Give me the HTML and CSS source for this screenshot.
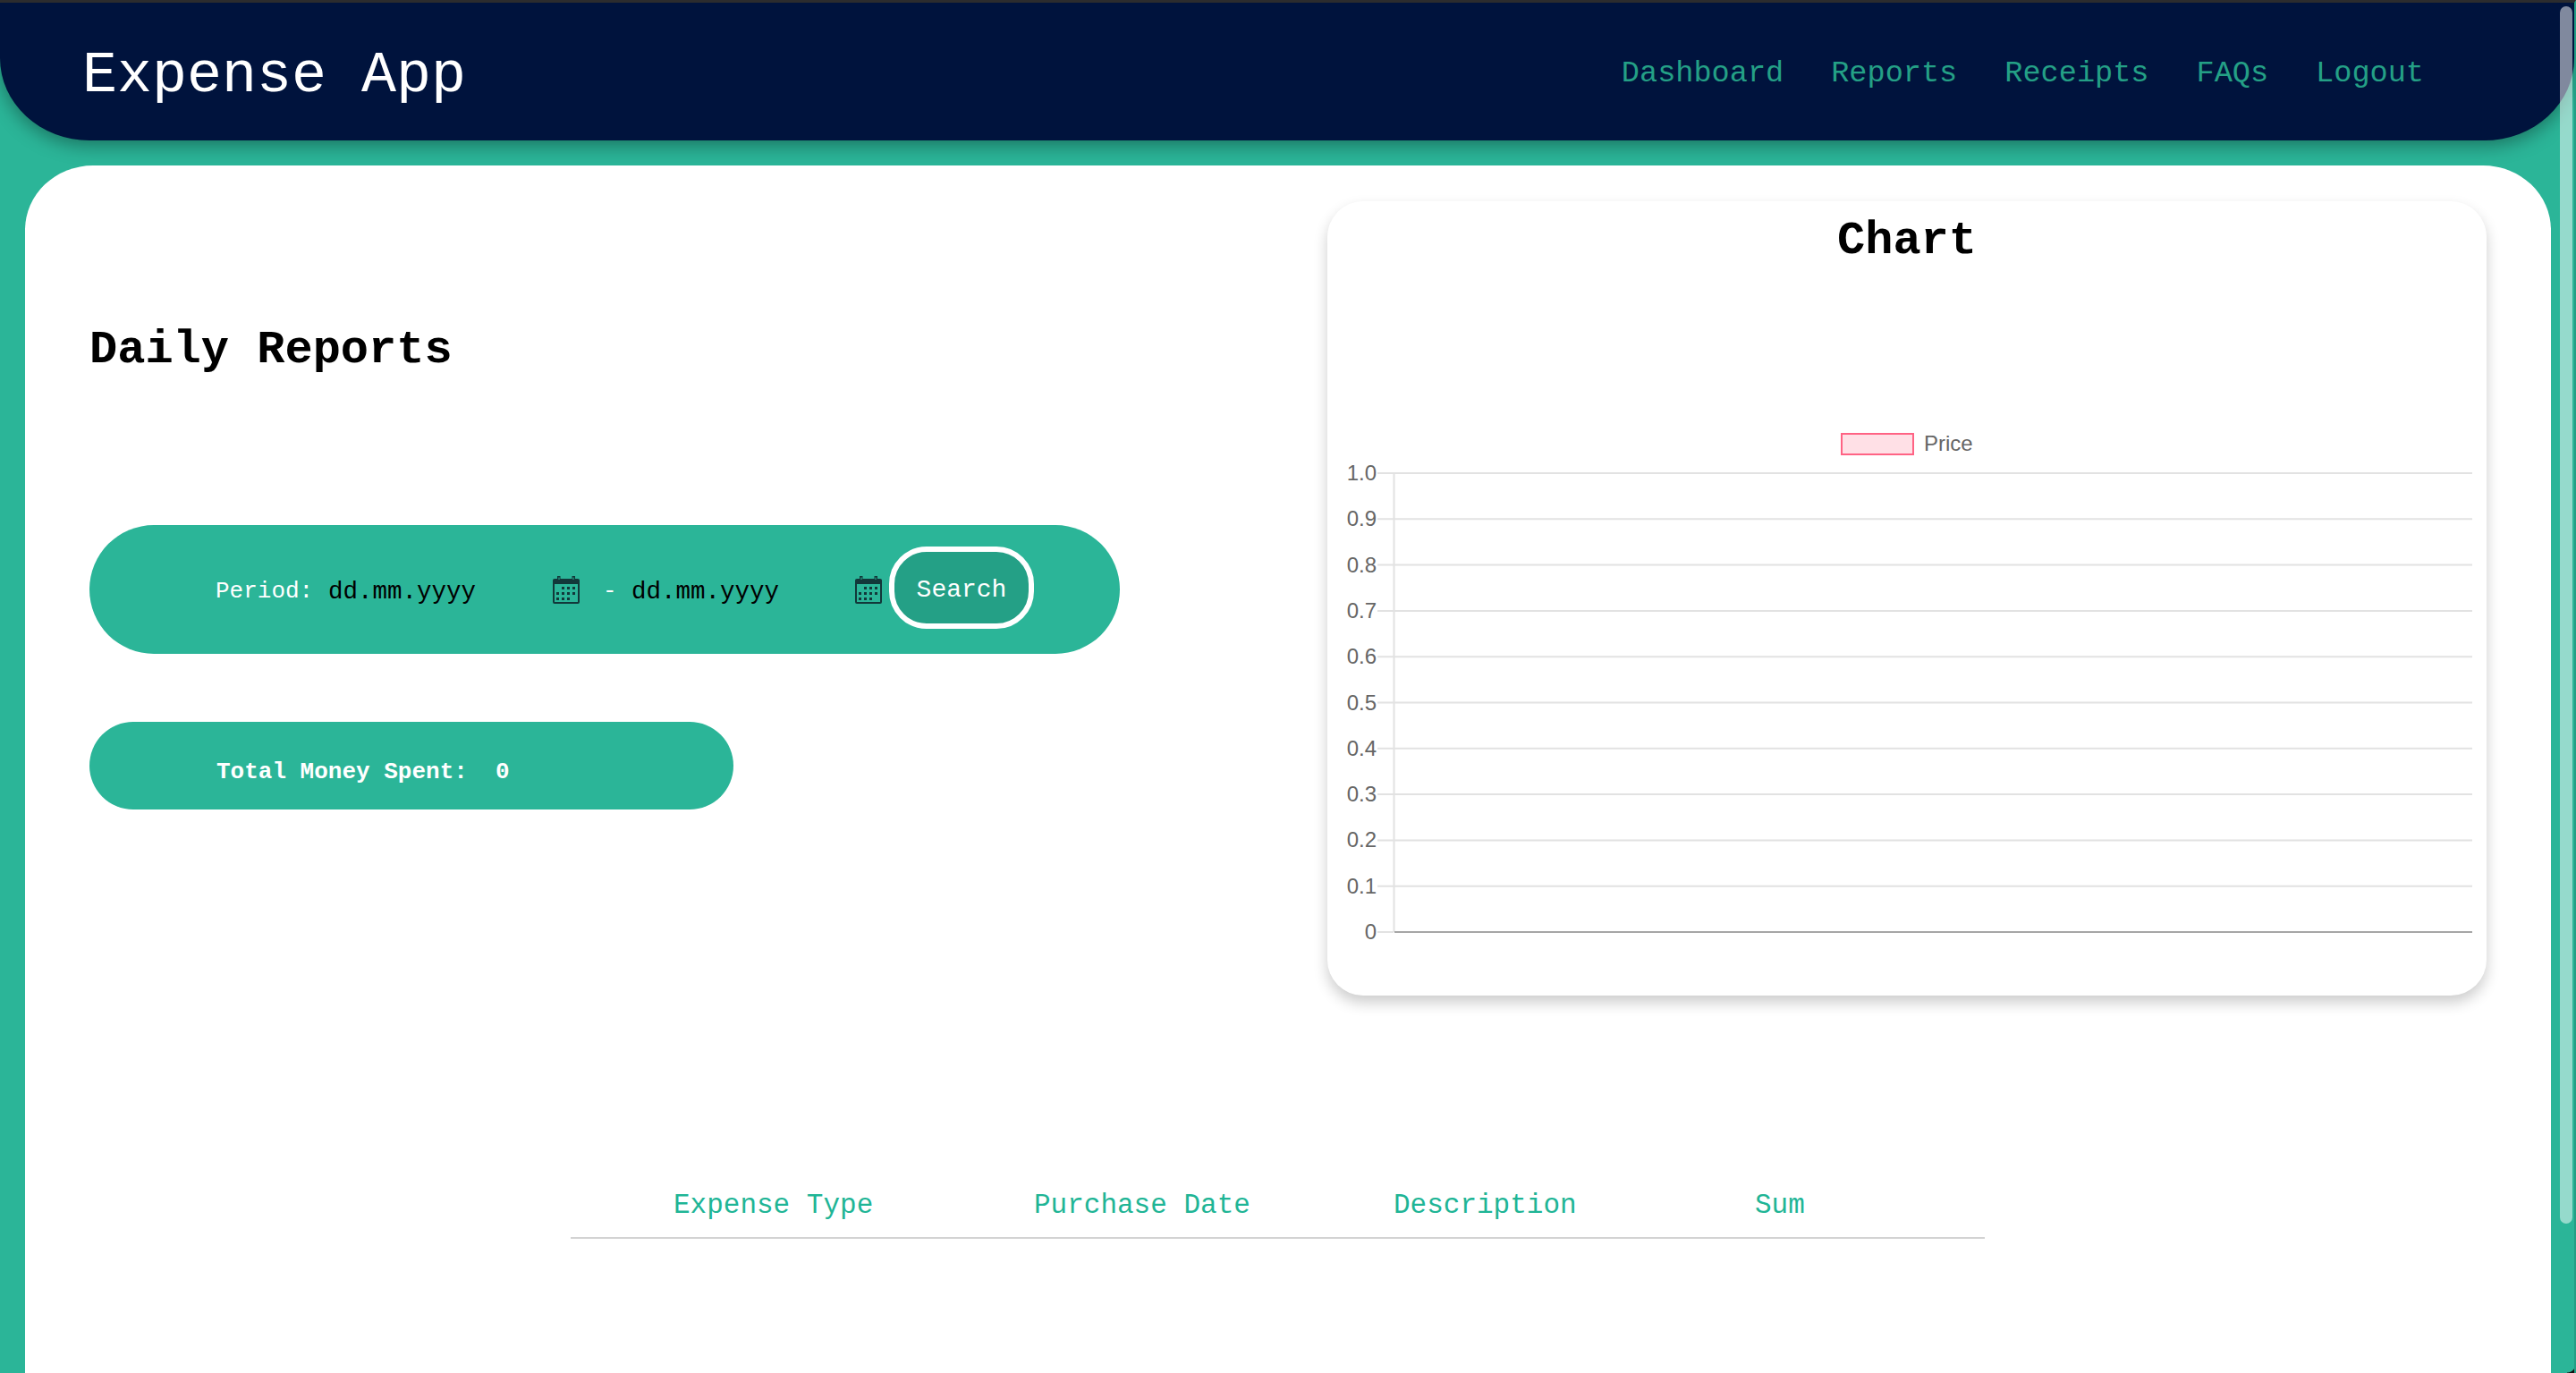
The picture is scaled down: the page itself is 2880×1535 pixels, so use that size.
FILE: index.html
```html
<!DOCTYPE html>
<html lang="en">
<head>
<meta charset="utf-8">
<title>Expense App</title>
<link rel="stylesheet" href="styles.css">
</head>
<body>
<div class="page">
  <header class="topbar">
    <div class="brand">Expense App</div>
    <nav class="nav">
      <a href="#">Dashboard</a>
      <a href="#">Reports</a>
      <a href="#">Receipts</a>
      <a href="#">FAQs</a>
      <a href="#">Logout</a>
    </nav>
  </header>
  <main class="main">
    <div class="top-grid">
      <section class="left">
        <h1 class="title">Daily Reports</h1>
        <form class="period pill">
          <span class="period-label">Period:</span>
          <span class="date-field">
            <span class="date-text">dd.mm.yyyy</span>
            <svg class="cal" viewBox="0 0 30 32"><use href="#calendar"/></svg>
          </span>
          <span class="dash">-</span>
          <span class="date-field date-field-b">
            <span class="date-text">dd.mm.yyyy</span>
            <svg class="cal" viewBox="0 0 30 32"><use href="#calendar"/></svg>
          </span>
          <button class="search" type="button">Search</button>
        </form>
        <div class="total pill">Total Money Spent:  0</div>
      </section>
      <section class="card">
        <h2 class="card-title">Chart</h2>
        <svg class="chart" viewBox="0 0 1296 803" width="1296" height="803">
          <rect class="legend-box" x="575" y="175" width="80" height="23"/>
          <text class="legend-text" x="667" y="183" dy="11">Price</text>
          <g class="grid">
            <line x1="56" x2="1280" y1="219" y2="219"/>
            <line x1="56" x2="1280" y1="270.3" y2="270.3"/>
            <line x1="56" x2="1280" y1="321.6" y2="321.6"/>
            <line x1="56" x2="1280" y1="372.9" y2="372.9"/>
            <line x1="56" x2="1280" y1="424.2" y2="424.2"/>
            <line x1="56" x2="1280" y1="475.5" y2="475.5"/>
            <line x1="56" x2="1280" y1="526.8" y2="526.8"/>
            <line x1="56" x2="1280" y1="578.1" y2="578.1"/>
            <line x1="56" x2="1280" y1="629.4" y2="629.4"/>
            <line x1="56" x2="1280" y1="680.7" y2="680.7"/>
            <line x1="74.5" x2="74.5" y1="219" y2="732"/>
            <line x1="56" x2="74" y1="732" y2="732"/>
          </g>
          <line class="zero" x1="75" x2="1280" y1="732" y2="732"/>
          <g class="ticks">
            <text x="55" y="227">1.0</text>
            <text x="55" y="278.3">0.9</text>
            <text x="55" y="329.6">0.8</text>
            <text x="55" y="380.9">0.7</text>
            <text x="55" y="432.2">0.6</text>
            <text x="55" y="483.5">0.5</text>
            <text x="55" y="534.8">0.4</text>
            <text x="55" y="586.1">0.3</text>
            <text x="55" y="637.4">0.2</text>
            <text x="55" y="688.7">0.1</text>
            <text x="55" y="740">0</text>
          </g>
        </svg>
      </section>
    </div>
    <section class="table-wrap">
      <div class="table-head">
        <span>Expense Type</span>
        <span>Purchase Date</span>
        <span>Description</span>
        <span>Sum</span>
      </div>
    </section>
  </main>
  <div class="scrollbar"></div>
  <div class="window-corner"></div>
</div>
<svg class="defs" width="0" height="0">
  <defs>
    <g id="calendar">
      <path class="cal-line" d="M2 6 h26 a1 1 0 0 1 1 1 v23 a1 1 0 0 1 -1 1 h-26 a1 1 0 0 1 -1 -1 v-23 a1 1 0 0 1 1 -1z"/>
      <path class="cal-fill" d="M0 6 a2 2 0 0 1 2 -2 h3 v-3 h3.500 v3 h13 v-3 h3.500 v3 h3 a2 2 0 0 1 2 2 v4 h-30z"/>
      <rect class="cal-peg" x="6.500" y="2.500" width="1" height="2.500"/>
      <rect class="cal-peg" x="22.500" y="2.500" width="1" height="2.500"/>
      <g class="cal-dots">
        <rect x="10" y="13" width="3" height="3"/><rect x="16" y="13" width="3" height="3"/><rect x="22" y="13" width="3" height="3"/>
        <rect x="4" y="19" width="3" height="3"/><rect x="10" y="19" width="3" height="3"/><rect x="16" y="19" width="3" height="3"/><rect x="22" y="19" width="3" height="3"/>
        <rect x="4" y="25" width="3" height="3"/><rect x="10" y="25" width="3" height="3"/><rect x="16" y="25" width="3" height="3"/>
      </g>
    </g>
  </defs>
</svg>
</body>
</html>
```
FILE: styles.css
```css
* { box-sizing: border-box; }
html, body { margin: 0; height: 100%; overflow: hidden; }
body {
  background: #2bb598;
  font-family: "Liberation Mono", "Courier New", monospace;
}
.page {
  position: relative;
  height: 1535px;
  border-top: 3px solid #2c2c2e;
  border-right: 2px solid #239e85;
  overflow: hidden;
}
.topbar {
  display: flex;
  align-items: center;
  justify-content: space-between;
  height: 154px;
  padding: 4px 168px 0 92px;
  background: #00133d;
  border-radius: 0 0 100px 100px / 0 0 92px 92px;
  box-shadow: 0 6px 20px rgba(0, 0, 0, 0.35);
}
.brand { color: #fff; font-size: 65px; margin-top: 6px; }
.nav { display: flex; gap: 53px; }
.nav a { color: #24a086; font-size: 33.600px; text-decoration: none; }
.main {
  margin: 28px 26px 0 28px;
  height: 1360px;
  background: #fff;
  border-radius: 76px 76px 0 0 / 72px 72px 0 0;
  padding: 40px 72px 0;
}
.top-grid { display: flex; justify-content: space-between; align-items: flex-start; }
.left { width: 1152px; padding-top: 137px; }
.title {
  margin: 0;
  height: 225px;
  font-size: 52px;
  line-height: 60px;
  font-weight: 700;
  color: #000;
}
.pill { background: #2bb598; color: #fff; font-size: 26px; }
.period {
  display: flex;
  align-items: center;
  width: 1152px;
  height: 144px;
  padding-left: 141px;
  border-radius: 72px;
}
.period-label { width: 126px; margin-top: 4px; }
.date-field {
  display: flex;
  justify-content: space-between;
  align-items: center;
  width: 281px;
}
.date-field-b { width: 280px; }
.date-text { color: #000; font-size: 27.500px; margin-top: 4px; }
.cal { width: 30px; height: 32px; }
.dash { width: 58px; padding-left: 26px; margin-top: 4px; }
.search {
  width: 162px;
  height: 92px;
  margin: -4px 0 0 8px;
  padding: 4px 0 0;
  background: #24a086;
  border: 6px solid #fff;
  border-radius: 42px;
  color: #fff;
  font-family: inherit;
  font-size: 28px;
}
.total {
  width: 720px;
  height: 98px;
  margin-top: 76px;
  padding: 14px 0 0 142px;
  border-radius: 49px;
  display: flex;
  align-items: center;
  font-weight: 700;
  white-space: pre;
}
.card {
  width: 1296px;
  height: 888px;
  background: #fff;
  border-radius: 40px;
  box-shadow: 0 8px 16px rgba(0, 0, 0, 0.2);
}
.card-title {
  margin: 0;
  height: 85px;
  padding-top: 15px;
  font-size: 52px;
  line-height: 60px;
  text-align: center;
  color: #000;
}
.chart { display: block; }
.legend-box { fill: rgba(255, 99, 132, 0.2); stroke: #ff6384; stroke-width: 2; }
.legend-text, .ticks text { font-family: "Liberation Sans", Arial, sans-serif; font-size: 24px; fill: #666; }
.ticks text { text-anchor: end; }
.grid line { stroke: #e2e2e2; stroke-width: 2; }
.zero { stroke: #a6a6a6; stroke-width: 2; }
.table-wrap { margin: 160px 0 0 538px; width: 1581px; }
.table-head {
  display: grid;
  grid-template-columns: 403px 402px 404px 1fr;
  height: 112px;
  padding: 57px 0 0 115px;
  border-bottom: 2px solid #d3d3d3;
  color: #1fb596;
  font-size: 31px;
  line-height: 36px;
}
.scrollbar {
  position: absolute;
  top: 4px;
  right: 2px;
  width: 14px;
  height: 1361px;
  border-radius: 7px;
  background: rgba(255, 255, 255, 0.5);
}
.window-corner {
  position: absolute;
  right: -2px;
  bottom: 0;
  width: 10px;
  height: 10px;
  background: radial-gradient(circle at 0 0, transparent 9px, #111 10px);
}
.defs { position: absolute; }
.cal-line { fill: none; stroke: #12383a; stroke-width: 2; }
.cal-fill { fill: #12383a; }
.cal-peg { fill: #2bb598; }
.cal-dots rect { fill: #12383a; }
```
